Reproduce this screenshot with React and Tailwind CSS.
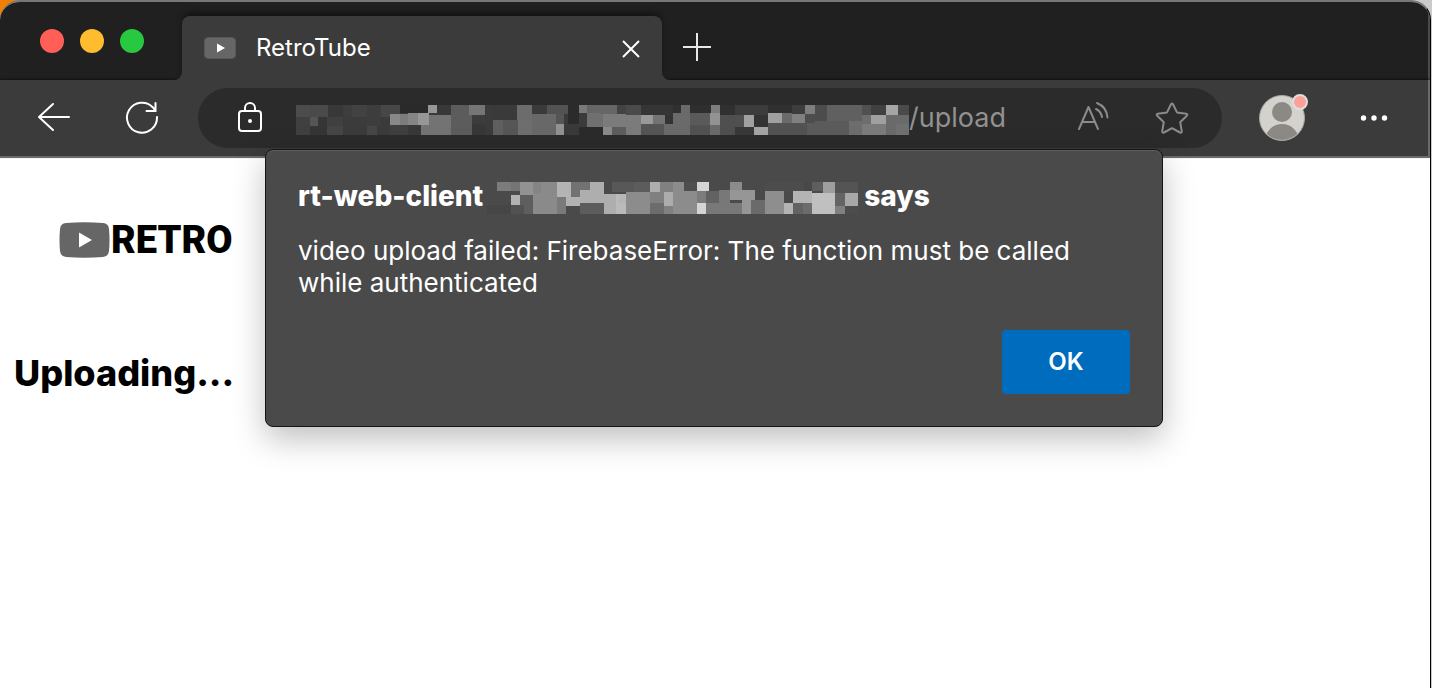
import React from 'react';

// Each cell: [x, y, width, height, grey level]
const URL_CELLS = [
  [0,0,816,90,58],[0,0,42,36,76],[42,0,54,36,74],[96,0,45,36,56],[141,0,27,36,61],[168,0,45,36,66],[213,0,42,36,61],[255,0,57,36,71],
  [312,0,84,24,42],[396,0,27,24,151],[423,0,42,30,56],[465,0,63,90,92],[519,0,48,30,117],[567,0,24,90,59],[591,0,72,45,58],
  [663,0,45,45,108],[708,0,45,27,58],[753,0,63,27,82],[849,0,24,24,122],[873,0,69,24,102],
  [0,36,42,54,64],[42,36,24,27,85],[66,36,27,27,53],[42,63,51,27,53],[93,36,48,27,64],[93,63,48,27,70],[141,36,72,54,59],
  [213,36,42,27,61],[213,63,30,27,70],[243,63,40,27,59],[282,27,30,33,136],[312,27,24,33,124],[336,24,30,36,133],[366,24,33,36,151],
  [282,60,54,30,63],[336,60,39,30,56],[375,60,90,30,115],[399,30,66,60,115],[528,30,39,27,60],[528,57,39,33,55],
  [591,45,30,45,95],[621,45,45,45,86],[666,45,42,45,110],[708,27,72,63,104],[780,27,24,30,85],[780,57,24,33,146],[804,57,45,33,58],
  [849,24,24,42,59],[873,24,48,42,112],[921,27,69,39,123],[921,66,27,24,139],
  [912,0,51,27,102],[963,0,27,27,67],[990,0,45,30,74],[1035,0,96,30,53],[1131,0,24,24,48],[1155,0,27,24,106],[1131,24,51,66,106],
  [1182,0,63,24,46],[1245,0,27,24,125],[1272,0,45,30,48],[1317,0,99,30,60],[1416,0,72,24,48],[1488,0,39,27,61],[1527,0,30,27,125],
  [1557,0,36,48,76],[1593,0,105,48,96],[1698,0,27,30,80],[1725,0,45,30,64],[1770,0,36,30,165],[1806,0,33,30,74],
  [948,66,42,24,93],[990,30,45,60,123],[1035,30,36,27,153],[1071,30,36,27,115],[1107,30,24,27,51],[1035,57,69,33,85],[1104,57,27,33,106],
  [1182,24,60,36,90],[1182,60,60,30,82],[1242,24,30,36,146],[1242,60,30,30,106],[1272,30,72,60,79],[1317,66,57,24,56],
  [1344,30,30,36,160],[1374,30,42,36,51],[1374,66,42,24,165],[1416,24,42,30,160],[1458,24,30,30,106],[1488,27,39,27,128],
  [1527,27,30,27,77],[1416,54,117,36,82],[1533,54,126,36,91],[1557,48,102,42,91],[1659,48,39,42,109],[1698,30,27,27,109],
  [1698,57,72,33,123],[1725,30,45,27,160],[1770,30,69,60,106],[1800,57,39,33,112],
];

const HOST_CELLS = [
  [0,69,138,27,70],[30,0,42,27,124],[72,0,27,27,117],[99,0,39,39,146],[138,0,72,96,138],[138,0,24,32,132],[210,0,42,45,180],
  [252,0,57,24,114],[309,0,42,36,174],[351,0,24,36,74],[375,0,66,30,88],[441,0,48,30,92],[489,0,30,30,174],[519,0,39,30,128],
  [558,0,33,27,140],[591,0,39,27,78],[630,0,36,27,212],[729,0,36,24,140],[834,0,117,27,76],[951,0,24,27,72],[975,0,33,27,94],
  [1008,0,36,33,158],[1044,0,69,33,84],
  [30,27,42,42,74],[72,39,27,30,178],[99,39,39,57,94],[72,69,39,27,82],[210,45,27,51,122],[237,45,42,27,178],[252,24,57,21,114],
  [279,24,72,39,174],[279,63,72,33,92],[351,36,42,60,174],[387,36,30,60,186],[393,36,24,27,182],[417,30,72,66,140],
  [489,30,42,33,128],[531,30,27,42,172],[489,63,42,33,108],[531,72,27,24,128],[558,27,72,69,140],[630,27,27,36,124],
  [630,63,27,33,212],[657,27,39,36,98],[657,63,108,33,120],[696,24,33,72,120],[729,24,75,30,150],[765,54,27,42,150],
  [792,54,42,42,106],[834,27,57,69,142],[891,63,27,33,180],[918,27,57,36,180],[918,63,30,33,98],[948,63,27,33,108],
  [975,33,69,63,192],[1044,33,30,39,100],[1044,72,30,24,128],[1074,33,39,39,168],[1074,72,39,24,76],
];

function Mosaic({ cells, viewBox, className }) {
  return (
    <svg viewBox={viewBox} className={className} shapeRendering="crispEdges" aria-hidden="true">
      {cells.map(([x, y, w, h, g], i) => (
        <rect key={i} x={x} y={y} width={w} height={h} fill={`rgb(${g},${g},${g})`} />
      ))}
    </svg>
  );
}

function TitleBar() {
  return (
    <header className="flex h-[78px] items-end border-r-2 border-[#4a4a4a] bg-[#202020]">
      <div className="flex h-full w-[182px] shrink-0 items-center gap-4 pl-10">
        <button aria-label="Close window" className="size-6 rounded-full bg-[#ff5f57]" />
        <button aria-label="Minimize window" className="size-6 rounded-full bg-[#febc2e]" />
        <button aria-label="Zoom window" className="size-6 rounded-full bg-[#28c840]" />
      </div>
      <div className="relative flex h-16 w-[480px] items-center rounded-t-lg bg-[#3b3b3b] pr-5 pl-[22px] shadow-[0_-4px_6px_-1px_rgba(0,0,0,0.45)]">
        <svg className="absolute bottom-0 -left-2 size-2" viewBox="0 0 8 8" aria-hidden="true">
          <path d="M8 0v8H0a8 8 0 0 0 8-8z" fill="#3b3b3b" />
        </svg>
        <svg className="absolute -right-2 bottom-0 size-2" viewBox="0 0 8 8" aria-hidden="true">
          <path d="M0 0v8h8a8 8 0 0 1-8-8z" fill="#3b3b3b" />
        </svg>
        <svg className="h-6 w-8" viewBox="0 0 32 24" aria-hidden="true">
          <rect x="0.5" y="1.5" width="31" height="21" rx="4" fill="#666" stroke="#595959" />
          <path d="M13 7.5v9l8-4.500z" fill="#fff" />
        </svg>
        <span className="ml-5 flex-1 text-2xl">RetroTube</span>
        <button aria-label="Close tab">
          <svg className="size-[22px]" viewBox="0 0 22 22" fill="none" stroke="#fff" strokeWidth="2" aria-hidden="true">
            <path d="M3 4l16 16M19 4L3 20" />
          </svg>
        </button>
      </div>
      <button aria-label="New tab" className="mb-[18px] ml-5">
        <svg className="size-[30px]" viewBox="0 0 30 30" stroke="#e8e8e8" strokeWidth="2" aria-hidden="true">
          <path d="M15 1v28M1 15h28" />
        </svg>
      </button>
    </header>
  );
}

function Toolbar() {
  return (
    <nav className="flex h-[78px] items-center border-r-2 border-b-2 border-[#6b6969] bg-[#3b3b3b] pr-[38px] pl-9 shadow-[0_-1px_2px_rgba(0,0,0,0.5)]">
      <button aria-label="Back">
        <svg className="size-9" viewBox="0 0 36 36" fill="none" stroke="#fff" strokeWidth="2" strokeLinecap="round" strokeLinejoin="round" aria-hidden="true">
          <path d="M17 4L3 17 17 30M3 17h30" />
        </svg>
      </button>
      <button aria-label="Refresh" className="ml-[52px]">
        <svg className="size-9" viewBox="0 0 36 36" fill="none" stroke="#fff" strokeWidth="2" strokeLinecap="round" aria-hidden="true">
          <path d="M33 17A15 15 0 1 1 29 7.500L31.500 11M31.500 3v8h-9" />
        </svg>
      </button>
      <div className="ml-[38px] flex h-[60px] min-w-0 flex-1 items-center rounded-full bg-[#2b2b2b] pr-8 pl-[37px]">
        <button aria-label="Site information">
          <svg className="h-9 w-[30px]" viewBox="0 0 30 36" fill="none" stroke="#fff" strokeWidth="2" aria-hidden="true">
            <rect x="4" y="11" width="22" height="20" rx="3" />
            <path d="M10 11V8a5 5 0 0 1 10 0v3" />
            <circle cx="15" cy="21" r="2" fill="#fff" stroke="none" />
          </svg>
        </button>
        <Mosaic cells={URL_CELLS} viewBox="0 0 1839 90" className="mt-1 ml-[31px] h-[30px] w-[613px] shrink-0" />
        <input aria-label="Address" defaultValue="/upload" className="min-w-0 flex-1 bg-transparent text-[27px] text-[#919191] outline-none" />
        <button aria-label="Read aloud">
          <svg className="h-9 w-[34px]" viewBox="0 0 34 36" fill="none" stroke="#8b8b8b" strokeWidth="2" strokeLinecap="round" strokeLinejoin="round" aria-hidden="true">
            <path d="M3 29L12.500 7 22 29M6 22h13" />
            <path d="M20 9A11 11 0 0 1 26 17M21 3A17 17 0 0 1 31.500 17.500" />
          </svg>
        </button>
        <button aria-label="Add to favorites" className="ml-11">
          <svg className="size-9" viewBox="0 0 36 36" fill="none" stroke="#8b8b8b" strokeWidth="2" strokeLinejoin="round" aria-hidden="true">
            <path d="M17 4.200q1-1.600 2 0l4 8.200 9.200 1.400q1.800.5.6 1.900l-6.600 6.500 1.600 9.100q0 1.800-1.800 1.200L18 28.200l-8 4.300q-1.800.6-1.800-1.200l1.600-9.100-6.600-6.500q-1.200-1.400.6-1.900l9.200-1.400z" />
          </svg>
        </button>
      </div>
      <button aria-label="Profile" className="ml-9">
        <svg className="size-[50px]" viewBox="0 0 50 50" aria-hidden="true">
          <defs>
            <clipPath id="avatar">
              <circle cx="24" cy="25" r="22" />
            </clipPath>
          </defs>
          <circle cx="24" cy="25" r="22.500" fill="#d4d2cd" stroke="#aaa7a3" />
          <g clipPath="url(#avatar)" fill="#8c8884">
            <circle cx="24" cy="19" r="10" />
            <circle cx="24" cy="48" r="17" />
          </g>
          <circle cx="42" cy="9" r="7" fill="#ff9f99" stroke="#dedede" strokeWidth="2" />
        </svg>
      </button>
      <button aria-label="Settings and more" className="ml-[50px]">
        <svg className="h-8 w-8" viewBox="0 0 32 32" fill="#fff" aria-hidden="true">
          <circle cx="5.500" cy="16" r="2.700" />
          <circle cx="16" cy="16" r="2.700" />
          <circle cx="26.500" cy="16" r="2.700" />
        </svg>
      </button>
    </nav>
  );
}

function AlertDialog() {
  return (
    <div role="alertdialog" aria-labelledby="alert-title" aria-describedby="alert-text" className="w-[898px] max-w-full rounded-lg border border-[#151515] bg-[#4a4a4a] p-8 text-white shadow-[0_12px_32px_rgba(0,0,0,0.25),inset_0_1px_0_#5e5e5e]">
      <h2 id="alert-title" className="flex h-8 items-start gap-1 text-[28px] leading-7 font-extrabold">
        <span>rt-web-client</span>
        <Mosaic cells={HOST_CELLS} viewBox="0 0 1113 96" className="h-8 w-[371px] shrink-0" />
        <span className="ml-0.5">says</span>
      </h2>
      <p id="alert-text" className="mt-[21px] text-[26px] leading-8">
        video upload failed: FirebaseError: The function must be called while authenticated
      </p>
      <div className="mt-[31px] flex justify-end">
        <button className="h-16 w-32 rounded bg-[#006cbe] text-2xl font-semibold">OK</button>
      </div>
    </div>
  );
}

export default function App() {
  return (
    <div className="min-h-screen bg-linear-to-r from-[#f08000] from-50% to-[#cacaca] to-50% pr-px font-['Inter','Liberation_Sans',sans-serif] text-white">
      <div className="relative min-h-screen overflow-hidden rounded-t-[20px] border-t-2 border-r border-t-[#777] border-r-black bg-white">
        <TitleBar />
        <Toolbar />
        <main className="px-3.5 pt-[58px] text-black">
          <a href="#home" className="ml-[45px] flex items-center gap-px">
            <svg className="h-9 w-[51px]" viewBox="0 0 51 36" aria-hidden="true">
              <path d="M7 1Q25.500-.6 44 1q5.500.5 6 6 1 11 0 22-.5 5.500-6 6-18.500 1.600-37 0-5.500-.5-6-6Q0 18 1 7q.5-5.500 6-6z" fill="#666" />
              <path d="M20 10.500v15l13-7.500z" fill="#fff" />
            </svg>
            <span className="font-['Roboto','Open_Sans',sans-serif] text-[38px] leading-12 font-black">RETRO</span>
          </a>
          <h1 className="mt-[85px] text-4xl leading-12 font-extrabold">Uploading...</h1>
        </main>
        <div className="absolute top-[147px] right-0.5 left-0 flex justify-center">
          <AlertDialog />
        </div>
      </div>
    </div>
  );
}
